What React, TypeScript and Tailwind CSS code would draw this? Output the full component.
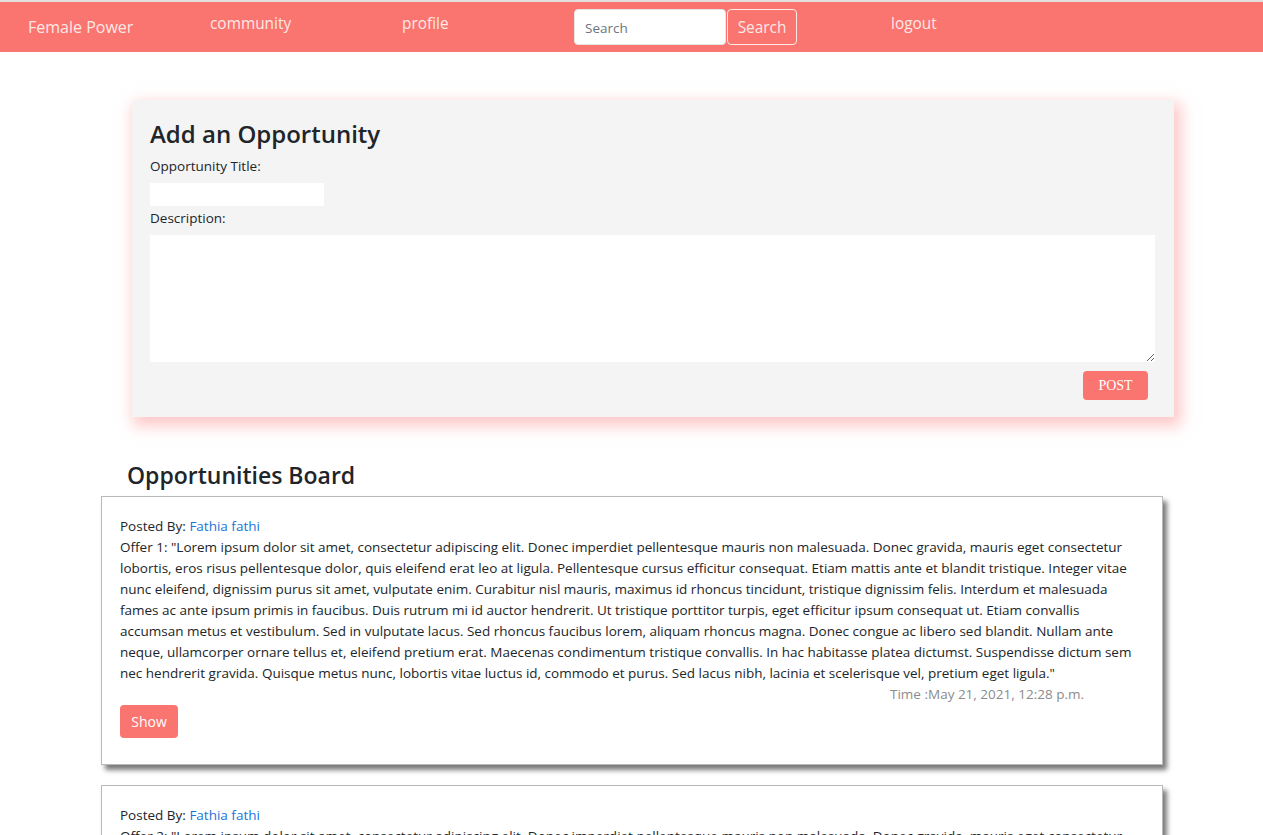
import React from "react";

const lines1 = [
  'Offer 1: "Lorem ipsum dolor sit amet, consectetur adipiscing elit. Donec imperdiet pellentesque mauris non malesuada. Donec gravida, mauris eget consectetur',
  "lobortis, eros risus pellentesque dolor, quis eleifend erat leo at ligula. Pellentesque cursus efficitur consequat. Etiam mattis ante et blandit tristique. Integer vitae",
  "nunc eleifend, dignissim purus sit amet, vulputate enim. Curabitur nisl mauris, maximus id rhoncus tincidunt, tristique dignissim felis. Interdum et malesuada",
  "fames ac ante ipsum primis in faucibus. Duis rutrum mi id auctor hendrerit. Ut tristique porttitor turpis, eget efficitur ipsum consequat ut. Etiam convallis",
  "accumsan metus et vestibulum. Sed in vulputate lacus. Sed rhoncus faucibus lorem, aliquam rhoncus magna. Donec congue ac libero sed blandit. Nullam ante",
  "neque, ullamcorper ornare tellus et, eleifend pretium erat. Maecenas condimentum tristique convallis. In hac habitasse platea dictumst. Suspendisse dictum sem",
  'nec hendrerit gravida. Quisque metus nunc, lobortis vitae luctus id, commodo et purus. Sed lacus nibh, lacinia et scelerisque vel, pretium eget ligula."',
];

function Card({ n }: { n: number }) {
  const lines = lines1.map((l, i) => (i === 0 ? l.replace("Offer 1", `Offer ${n}`) : l));
  return (
    <div className="ml-[101px] w-[1062px] border border-[#b9b9b9] bg-white px-[18px] pt-[19px] pb-[26px] shadow-[4px_5px_5px_#7a7a7a]">
      <div className="text-[13.5px] leading-[21px] text-[#212529]">
        Posted By: <span className="text-[#1b74d8]">Fathia fathi</span>
      </div>
      <div className="text-[13.5px] leading-[21px] text-[#212529]">
        {lines.map((l, i) => (
          <div key={i} className="whitespace-nowrap">
            {l}
          </div>
        ))}
      </div>
      <div className="mr-[60px] text-right text-[13.5px] leading-[21px] text-[#8c8c8c]">
        Time :May 21, 2021, 12:28 p.m.
      </div>
      <button className="h-[33px] w-[58px] rounded-[4px] bg-[#fa7470] text-[14px] text-white">
        Show
      </button>
    </div>
  );
}

export default function App() {
  return (
    <div
      className="min-h-[835px] overflow-hidden bg-white"
      style={{ fontFamily: '"Open Sans", "Noto Sans", sans-serif' }}
    >
      <nav className="flex h-[52px] items-start border-t-2 border-[#e4dede] bg-[#fa7470]">
        <div className="ml-[28px] mt-[13px] w-[182px] text-[16px] leading-[24px] text-[#fde9e6]">Female Power</div>
        <div className="mt-[10px] w-[192px] text-[15.4px] leading-[24px] text-[#fde9e6]">community</div>
        <div className="mt-[10px] w-[172px] text-[15.4px] leading-[24px] text-[#fde9e6]">profile</div>
        <div className="mt-[7px] flex w-[223px]">
          <input
            placeholder="Search"
            className="h-[36px] w-[152px] rounded-[4px] border border-[#e6e6e6] bg-white px-[10px] pt-[2px] text-[13.5px] text-[#495057] outline-none placeholder:text-[#6c757d]"
          />
          <button className="ml-[1px] h-[36px] w-[70px] rounded-[4px] border border-[#fde9e6] pt-[2px] text-[15.4px] text-[#fde9e6]">
            Search
          </button>
        </div>
        <div className="ml-[94px] mt-[10px] text-[15.4px] leading-[24px] text-[#fde9e6]">logout</div>
      </nav>

      <div className="ml-[132px] mt-[48px] w-[1042px] bg-[#f4f4f4] px-[18px] pt-[18px] pb-[17px] shadow-[4px_6px_14px_3px_rgba(255,170,170,0.65)]">
        <h2 className="text-[24px] font-semibold leading-[32px] text-[#212529]">Add an Opportunity</h2>
        <div className="mt-[6px] text-[13.5px] leading-[20px] text-[#212529]">Opportunity Title:</div>
        <input className="mt-[7px] block h-[23px] w-[174px] bg-white outline-none" />
        <div className="mt-[2px] text-[13.5px] leading-[20px] text-[#212529]">Description:</div>
        <textarea className="mt-[7px] block h-[127px] w-[1005px] bg-white outline-none" />
        <div className="mt-[9px] flex justify-end pr-[8px]">
          <button
            className="h-[29px] w-[65px] rounded-[4px] bg-[#fa7470] text-[14px] text-white"
            style={{ fontFamily: '"Liberation Serif", serif' }}
          >
            POST
          </button>
        </div>
      </div>

      <h2 className="ml-[127px] mt-[42px] text-[23px] font-semibold leading-[32px] text-[#212529]">
        Opportunities Board
      </h2>
      <div className="mt-[5px]">
        <Card n={1} />
      </div>
      <div className="mt-[20px]">
        <Card n={2} />
      </div>
    </div>
  );
}
